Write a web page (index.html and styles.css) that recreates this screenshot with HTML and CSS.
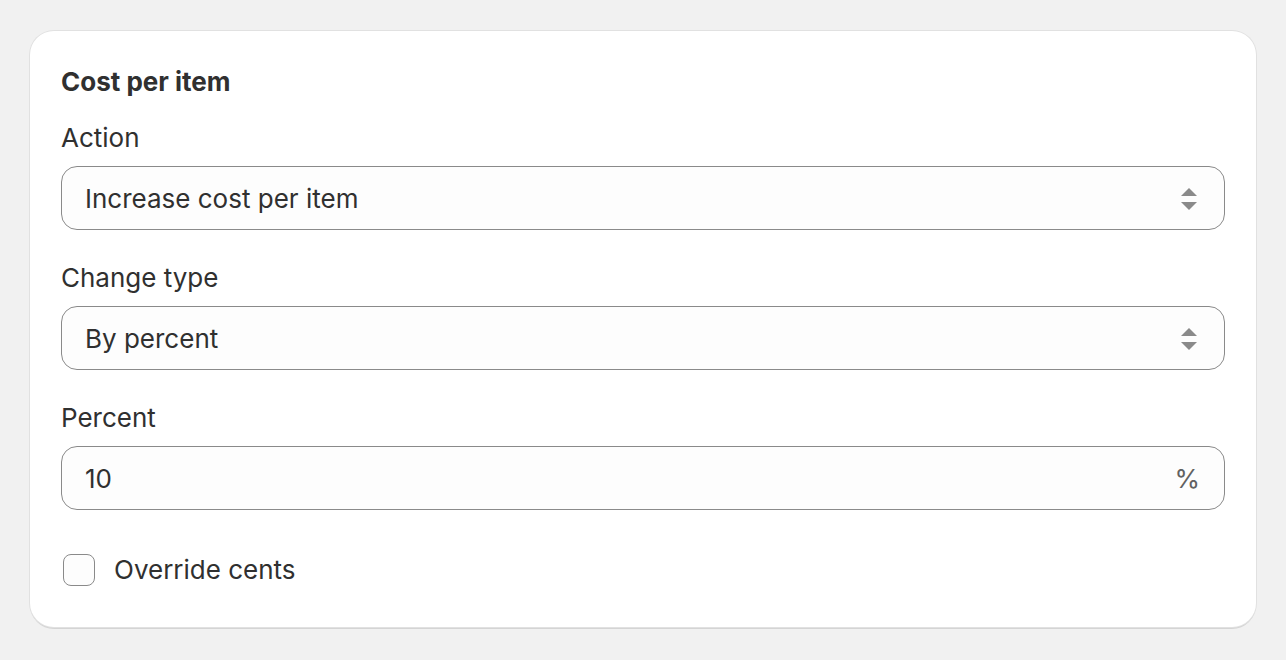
FILE: index.html
```html
<!DOCTYPE html>
<html lang="en">
<head>
  <meta charset="UTF-8">
  <title>Cost per item</title>
  <link rel="stylesheet" href="styles.css">
</head>
<body>
  <div class="card">
    <h2 class="card-title">Cost per item</h2>

    <div class="field">
      <label class="field-label">Action</label>
      <div class="select">
        <span class="select-value">Increase cost per item</span>
        <svg class="select-arrows" width="16" height="24" viewBox="0 0 16 24">
          <path d="M8 2 L16 10 H0 Z" fill="#8a8a8a"/>
          <path d="M0 16 H16 L8 24 Z" fill="#8a8a8a"/>
        </svg>
      </div>
    </div>

    <div class="field">
      <label class="field-label">Change type</label>
      <div class="select">
        <span class="select-value">By percent</span>
        <svg class="select-arrows" width="16" height="24" viewBox="0 0 16 24">
          <path d="M8 2 L16 10 H0 Z" fill="#8a8a8a"/>
          <path d="M0 16 H16 L8 24 Z" fill="#8a8a8a"/>
        </svg>
      </div>
    </div>

    <div class="field">
      <label class="field-label">Percent</label>
      <div class="select">
        <span class="select-value">10</span>
        <span class="suffix">%</span>
      </div>
    </div>

    <label class="checkbox-row">
      <span class="checkbox"></span>
      <span>Override cents</span>
    </label>
  </div>
</body>
</html>
```

FILE: styles.css
```css
body {
  margin: 0;
  padding: 31px 30px;
  background: #f1f1f1;
  font-family: Inter, "Noto Sans", sans-serif;
  color: #303030;
}

.card {
  background: #fff;
  border-radius: 24px;
  padding: 31px 31px 37px;
  box-shadow: 0 0 0 1px #e1e1e1, 0 2px 0 0 #d4d4d4;
}

.card-title {
  margin: 0 0 16px;
  font-size: 26px;
  line-height: 40px;
  font-weight: 650;
}

.field {
  margin-bottom: 28px;
}

.field-label {
  display: block;
  font-size: 26px;
  line-height: 40px;
  margin-bottom: 8px;
}

.select {
  display: flex;
  align-items: center;
  justify-content: space-between;
  height: 64px;
  box-sizing: border-box;
  padding: 0 27px 0 23px;
  border: 1px solid #8a8a8a;
  border-radius: 16px;
  background: #fdfdfd;
  font-size: 26px;
}

.select-arrows {
  display: block;
}

.suffix {
  color: #616161;
  margin-right: -3px;
}

.checkbox-row {
  display: flex;
  align-items: center;
  gap: 19px;
  margin-top: 40px;
  font-size: 26px;
  line-height: 40px;
  padding-left: 2px;
}

.checkbox {
  width: 32px;
  height: 32px;
  box-sizing: border-box;
  border: 1px solid #8a8a8a;
  border-radius: 8px;
  background: #fdfdfd;
}
```
